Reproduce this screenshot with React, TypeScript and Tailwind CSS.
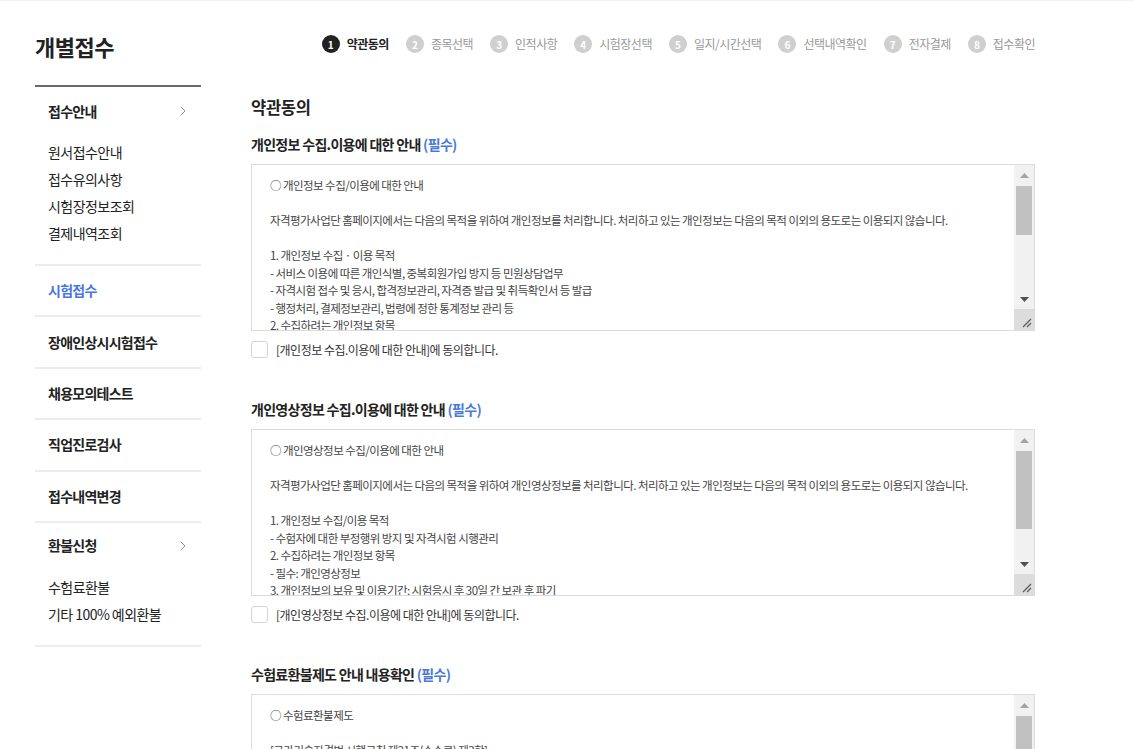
import { ChevronRight } from "lucide-react";

const font = { fontFamily: '"Noto Sans CJK KR", "Noto Sans", sans-serif' };

const steps = ["약관동의", "종목선택", "인적사항", "시험장선택", "일지/시간선택", "선택내역확인", "전자결제", "접수확인"];

const terms1 = `○ 개인정보 수집/이용에 대한 안내

자격평가사업단 홈페이지에서는 다음의 목적을 위하여 개인정보를 처리합니다. 처리하고 있는 개인정보는 다음의 목적 이외의 용도로는 이용되지 않습니다.

1. 개인정보 수집 · 이용 목적
- 서비스 이용에 따른 개인식별, 중복회원가입 방지 등 민원상담업무
- 자격시험 접수 및 응시, 합격정보관리, 자격증 발급 및 취득확인서 등 발급
- 행정처리, 결제정보관리, 법령에 정한 통계정보 관리 등
2. 수집하려는 개인정보 항목
- 필수: 성명, 생년월일, 성별, 주소, 휴대전화번호, 이메일, 사진
- 선택: 전화번호, 학력, 경력사항
3. 개인정보의 보유 및 이용기간
- 자격 관련 정보: 영구 보관
- 회원 정보: 회원 탈퇴 시까지`;

const terms2 = `○ 개인영상정보 수집/이용에 대한 안내

자격평가사업단 홈페이지에서는 다음의 목적을 위하여 개인영상정보를 처리합니다. 처리하고 있는 개인정보는 다음의 목적 이외의 용도로는 이용되지 않습니다.

1. 개인정보 수집/이용 목적
- 수험자에 대한 부정행위 방지 및 자격시험 시행관리
2. 수집하려는 개인정보 항목
- 필수: 개인영상정보
3. 개인정보의 보유 및 이용기간: 시험응시 후 30일 간 보관 후 파기`;

const terms3 = `○ 수험료환불제도

[국가기술자격법 시행규칙 제21조(수수료) 제3항]
- 접수기간 내 취소 시 100% 환불
- 접수기간 종료 후부터 시험 시행 전까지 50% 환불`;

function ScrollBar({ thumb }: { thumb: number }) {
    return (
        <div className="w-[20px] shrink-0 flex flex-col bg-[#f1f1f1]">
            <div className="h-[20px] flex items-center justify-center">
                <svg width="9" height="5" viewBox="0 0 9 5"><path d="M0 5 L4.5 0 L9 5 Z" fill="#a3a3a3" /></svg>
            </div>
            <div className="flex-1 px-[2px] pt-[1px]">
                <div className="bg-[#c1c1c1]" style={{ height: thumb }} />
            </div>
            <div className="h-[20px] flex items-center justify-center">
                <svg width="9" height="5" viewBox="0 0 9 5"><path d="M0 0 L9 0 L4.5 5 Z" fill="#505050" /></svg>
            </div>
            <div className="h-[21px] bg-[#dcdcdc] flex items-end justify-end p-[2px]">
                <svg width="10" height="10" viewBox="0 0 10 10">
                    <path d="M1 9 L9 1 M5 9 L9 5" stroke="#5a5a5a" strokeWidth="1.2" />
                </svg>
            </div>
        </div>
    );
}

function Section({ title, body, label, thumb, first }: { title: string; body: string; label: string; thumb: number; first?: boolean }) {
    return (
        <div className={first ? "mt-[15px]" : "mt-[41px]"}>
            <h4 className="text-[14px] leading-[20px] font-bold text-[#222] tracking-[-0.7px]">
                {title} <span className="text-[#4b79d8]">(필수)</span>
            </h4>
            <div className="mt-[10px] flex w-[784px] h-[167px] border border-[#dcdcdc]">
                <div className="flex-1 overflow-hidden whitespace-pre-wrap pt-[12px] pl-[18px] pr-[10px] text-[11.5px] leading-[17.5px] tracking-[-0.55px] text-[#444]">
                    {body}
                </div>
                <ScrollBar thumb={thumb} />
            </div>
            <label className="mt-[10px] flex items-center h-[17px]">
                <span className="w-[17px] h-[17px] rounded-[3px] border border-[#d4d4d4] bg-white" />
                <span className="ml-[8px] text-[12px] tracking-[-0.5px] text-[#333]">{label}</span>
            </label>
        </div>
    );
}

export default function App() {
    return (
        <div className="min-h-screen bg-white border-t border-[#edf2f9] text-[#222]" style={font}>
            <div className="flex pl-[35px]">

                {/* sidebar */}
                <aside className="w-[166px] shrink-0">
                    <h2 className="pt-[31px] pb-[25px] text-[22px] leading-[28px] font-bold tracking-[-0.5px] border-b-2 border-[#6a6a6a]">
                        개별접수
                    </h2>

                    <div className="pt-[14px] pb-[17px] border-b-2 border-[#ececec]">
                        <div className="flex items-center justify-between pl-[13px] pr-[10px] h-[20px]">
                            <span className="text-[14px] font-bold tracking-[-0.75px]">접수안내</span>
                            <ChevronRight size={16} strokeWidth={1.2} color="#777" />
                        </div>
                        <ul className="mt-[18px] pl-[13px] text-[14px] leading-[27px] tracking-[-0.55px] text-[#222]">
                            <li>원서접수안내</li>
                            <li>접수유의사항</li>
                            <li>시험장정보조회</li>
                            <li>결제내역조회</li>
                        </ul>
                    </div>

                    {["시험접수", "장애인상시시험접수", "채용모의테스트", "직업진로검사", "접수내역변경"].map((m, i) => (
                        <div key={m} className="h-[51.4px] flex items-center pl-[13px] border-b-2 border-[#ececec]">
                            <span className={"text-[14px] font-bold tracking-[-0.75px] " + (i === 0 ? "text-[#4a76de]" : "")}>{m}</span>
                        </div>
                    ))}

                    <div className="pt-[13px] pb-[17px] border-b-2 border-[#ececec]">
                        <div className="flex items-center justify-between pl-[13px] pr-[10px] h-[20px]">
                            <span className="text-[14px] font-bold tracking-[-0.75px]">환불신청</span>
                            <ChevronRight size={16} strokeWidth={1.2} color="#777" />
                        </div>
                        <ul className="mt-[18px] pl-[13px] text-[14px] leading-[27px] tracking-[-0.55px]">
                            <li>수험료환불</li>
                            <li>기타 100% 예외환불</li>
                        </ul>
                    </div>
                </aside>

                {/* main */}
                <main className="ml-[50px] w-[784px] pb-20">
                    <ol className="pt-[34px] flex justify-end items-center h-[52px] gap-[17px]">
                        {steps.map((s, i) => (
                            <li key={s} className="flex items-center gap-[7px]">
                                <span className={"w-[18px] h-[18px] rounded-full flex items-center justify-center text-[10px] font-bold text-white " + (i === 0 ? "bg-[#222]" : "bg-[#cfcfcf]")}>
                                    {i + 1}
                                </span>
                                <span className={"text-[12px] leading-[18px] tracking-[-0.5px] " + (i === 0 ? "font-bold text-[#222]" : "text-[#999]")}>
                                    {s}
                                </span>
                            </li>
                        ))}
                    </ol>

                    <h3 className="mt-[42px] text-[16.5px] leading-[24px] font-bold tracking-[-0.3px]">약관동의</h3>

                    <Section first thumb={49} title="개인정보 수집.이용에 대한 안내" body={terms1} label="[개인정보 수집.이용에 대한 안내]에 동의합니다." />
                    <Section thumb={78} title="개인영상정보 수집.이용에 대한 안내" body={terms2} label="[개인영상정보 수집.이용에 대한 안내]에 동의합니다." />
                    <Section thumb={60} title="수험료환불제도 안내 내용확인" body={terms3} label="[수험료환불제도 안내 내용확인]에 동의합니다." />
                </main>
            </div>
        </div>
    );
}
